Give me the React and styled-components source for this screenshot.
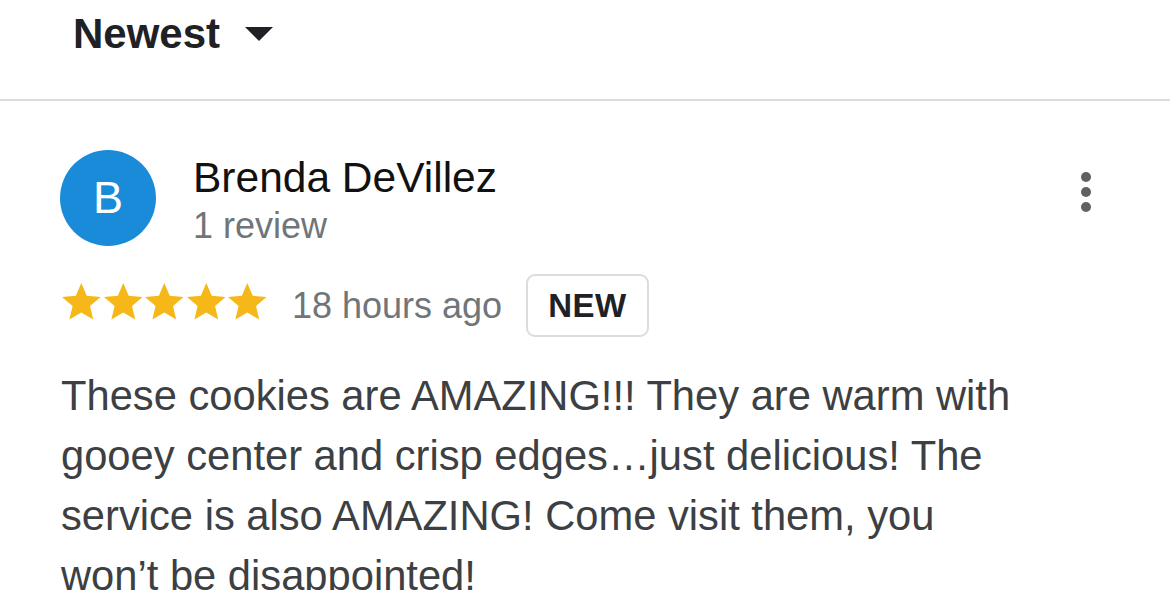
import React from 'react'
import styled, { createGlobalStyle } from 'styled-components'

const GlobalStyle = createGlobalStyle`
  html, body {
    margin: 0;
    padding: 0;
    background: #fff;
    font-family: 'Liberation Sans', Arial, Helvetica, sans-serif;
    overflow: hidden;
  }
`

const SortBar = styled.div`
  height: 101px;
  padding: 10px 0 0 73px;
  box-sizing: border-box;
  border-bottom: 2px solid #dadce0;
  display: flex;
  align-items: flex-start;
  gap: 25px;
`

const SortLabel = styled.span`
  font-size: 42px;
  line-height: 48px;
  font-weight: 700;
  color: #202124;
`

const Caret = styled.span`
  margin-top: 17px;
  width: 0;
  height: 0;
  border-left: 14px solid transparent;
  border-right: 14px solid transparent;
  border-top: 14px solid #202124;
`

const Review = styled.section`
  padding: 49px 79px 0 60px;
`

const Head = styled.div`
  display: flex;
  align-items: flex-start;
  gap: 37px;
`

const Avatar = styled.div`
  flex: 0 0 96px;
  height: 96px;
  border-radius: 50%;
  background: ${(p) => p.color};
  color: #fff;
  font-size: 45px;
  display: flex;
  align-items: center;
  justify-content: center;
`

const Author = styled.div`
  padding-top: 4px;
  display: flex;
  flex-direction: column;
`

const Name = styled.div`
  font-size: 42.5px;
  line-height: 48px;
  color: #111;
`

const Meta = styled.div`
  font-size: 36px;
  line-height: 44px;
  color: #70757a;
  margin-top: 2px;
`

const MenuButton = styled.div`
  margin: 22px 0 0 auto;
  display: flex;
  flex-direction: column;
  gap: 5px;
`

const Dot = styled.span`
  width: 10px;
  height: 10px;
  border-radius: 50%;
  background: #616161;
`

const RatingRow = styled.div`
  margin-top: 26px;
  padding-left: 2px;
  display: flex;
  align-items: center;
  gap: 25px;
`

const Stars = styled.div`
  display: flex;
  gap: 3px;
  margin-top: -8px;
`

const Ago = styled.span`
  font-size: 36px;
  line-height: 44px;
  color: #70757a;
`

const Badge = styled.span`
  box-sizing: border-box;
  height: 63px;
  margin-left: -1px;
  padding: 0 20px;
  border: 2px solid #dadce0;
  border-radius: 9px;
  display: flex;
  align-items: center;
  font-size: 33px;
  font-weight: 700;
  letter-spacing: 0.5px;
  color: #202124;
`

const Body = styled.p`
  margin: 29px 0 0 1px;
  max-width: 975px;
  font-size: 41.7px;
  line-height: 60px;
  color: #3c4043;
`

const Star = () => (
  <svg width="38.6" height="36.6" viewBox="2 2 20 19">
    <path
      fill="#f6b819"
      d="M12 17.27L18.18 21l-1.64-7.03L22 9.24l-7.19-.61L12 2 9.19 8.63 2 9.24l5.46 4.73L5.82 21z"
    />
  </svg>
)

const review = {
  initial: 'B',
  name: 'Brenda DeVillez',
  count: '1 review',
  rating: 5,
  ago: '18 hours ago',
  text: 'These cookies are AMAZING!!! They are warm with gooey center and crisp edges\u2026just delicious! The service is also AMAZING! Come visit them, you won\u2019t be disappointed!',
}

export default function App() {
  return (
    <>
      <GlobalStyle />
      <SortBar>
        <SortLabel>Newest</SortLabel>
        <Caret />
      </SortBar>
      <Review>
        <Head>
          <Avatar color="#1a8bd8">{review.initial}</Avatar>
          <Author>
            <Name>{review.name}</Name>
            <Meta>{review.count}</Meta>
          </Author>
          <MenuButton>
            <Dot />
            <Dot />
            <Dot />
          </MenuButton>
        </Head>
        <RatingRow>
          <Stars>
            {Array.from({ length: review.rating }).map((_, i) => (
              <Star key={i} />
            ))}
          </Stars>
          <Ago>{review.ago}</Ago>
          <Badge>NEW</Badge>
        </RatingRow>
        <Body>{review.text}</Body>
      </Review>
    </>
  )
}
